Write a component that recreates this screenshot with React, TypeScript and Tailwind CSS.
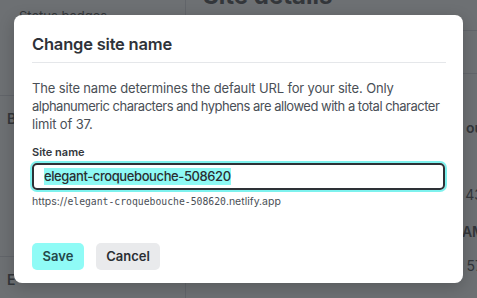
import React from "react";

export default function App() {
  const font = { fontFamily: "Inter, 'Noto Sans', sans-serif" };
  return (
    <div className="relative w-[477px] h-[298px] overflow-hidden bg-[#6d7073] text-[#33363a]" style={font}>
      {/* background page */}
      <div className="flex h-full">
        <div className="w-[186px] shrink-0 border-r border-[#62656a] flex flex-col">
          <div className="h-[96px] border-b border-[#62656a] pl-[19px] pt-[7px] text-[13px]">Status badges</div>
          <div className="h-[161px] border-b border-[#62656a] pl-[7px] pt-[12px] text-[14px] font-semibold">B</div>
          <div className="pl-[7px] pt-[12px] text-[14px] font-semibold">E</div>
        </div>
        <div className="flex-1 flex flex-col">
          <div className="h-[50px] border-b border-[#62656a] pl-[17px] -mt-[19px] text-[24px] font-bold leading-[30px]">Site details</div>
          <div className="h-[43px] border-b border-[#62656a]"></div>
          <div className="flex flex-col items-end pr-0 text-[14px]">
            <div className="mt-[43px] font-semibold translate-x-[6px]">ou</div>
            <div className="mt-[46px] translate-x-[6px]">43</div>
            <div className="mt-[16px] font-semibold translate-x-[8px]">AM</div>
            <div className="mt-[13px] translate-x-[6px]">57</div>
          </div>
        </div>
      </div>

      {/* modal */}
      <div className="absolute left-[14px] top-[15px] w-[449px] h-[268px] bg-white rounded-[8px] shadow-[0_4px_16px_rgba(0,0,0,0.2)] px-[18px] pt-[17px]">
        <h2 className="text-[16.5px] leading-[24px] font-semibold text-[#2e3238] tracking-[-0.2px]">Change site name</h2>
        <div className="mt-[6px] h-px bg-[#e5e7ea] mr-[-1px]"></div>
        <p className="mt-[16px] whitespace-nowrap text-[13px] leading-[18px] text-[#4a4f56] tracking-[-0.15px]">
          The site name determines the default URL for your site. Only
          <br />
          <span className="tracking-[-0.5px]">alphanumeric characters and hyphens are allowed with a total character</span>
          <br />
          limit of 37.
        </p>
        <div className="mt-[12px] text-[11px] leading-[14px] font-semibold text-[#33373c]">Site name</div>
        <div className="mt-[4px] h-[27px] rounded-[5px] border-2 border-[#2e3136] ring-2 ring-[#7ef2ee] flex items-center pl-[10px]">
          <span className="bg-[#8ef9f4] text-[13px] leading-[17px] font-medium tracking-[-0.4px] text-[#2a2d31]">elegant-croquebouche-508620</span>
        </div>
        <div className="mt-[5px] text-[10.5px] leading-[14px] text-[#4a4f56]">
          https://<span style={{ fontFamily: "'DejaVu Sans Mono', monospace" }} className="text-[9.75px]">elegant-croquebouche-508620</span>.netlify.app
        </div>
        <div className="mt-[34px] flex gap-[12px]">
          <button className="h-[27px] w-[52px] rounded-[5px] bg-[#8ffbf6] text-[13px] font-semibold text-[#24484a]">Save</button>
          <button className="h-[27px] w-[64px] rounded-[5px] bg-[#e9eaec] text-[13px] font-semibold text-[#2b2e33]">Cancel</button>
        </div>
      </div>
    </div>
  );
}
